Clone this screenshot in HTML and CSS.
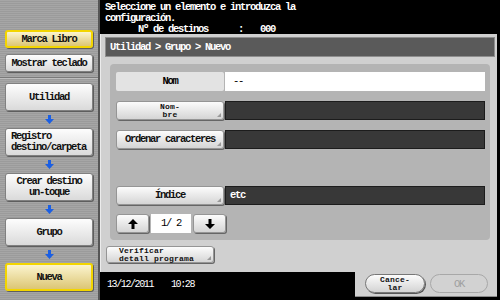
FILE: index.html
```html
<!DOCTYPE html>
<html lang="es">
<head>
    <meta charset="UTF-8">
    <meta name="viewport" content="width=device-width, initial-scale=1.0">
    <title>Utilidad &gt; Grupo &gt; Nuevo</title>
    <link rel="stylesheet" href="styles.css">
</head>
<body>
    <div class="screen">
        <div class="side">
            <div class="side-top">
                <button class="side-btn yellow short">Marca Libro</button>
                <button class="side-btn short">Mostrar teclado</button>
            </div>
            <div class="side-steps">
                <button class="side-btn">Utilidad</button>
                <svg class="step-arrow" width="9" height="9" viewBox="0 0 9 9"><path d="M3 0h3v4h3L4.5 9 0 4h3z"/></svg>
                <button class="side-btn left">Registro<br>destino/carpeta</button>
                <svg class="step-arrow" width="9" height="9" viewBox="0 0 9 9"><path d="M3 0h3v4h3L4.5 9 0 4h3z"/></svg>
                <button class="side-btn">Crear destino<br>un-toque</button>
                <svg class="step-arrow" width="9" height="9" viewBox="0 0 9 9"><path d="M3 0h3v4h3L4.5 9 0 4h3z"/></svg>
                <button class="side-btn">Grupo</button>
                <svg class="step-arrow" width="9" height="9" viewBox="0 0 9 9"><path d="M3 0h3v4h3L4.5 9 0 4h3z"/></svg>
                <button class="side-btn yellow">Nueva</button>
            </div>
        </div>

        <div class="main">
            <div class="header">
                <p>Seleccione un elemento e introduzca la</p>
                <p>configuración.</p>
                <p class="count">Nº de destinos<span class="colon">:</span><span class="num">000</span></p>
            </div>

            <div class="frame">
                <div class="crumb">Utilidad &gt; Grupo &gt; Nuevo</div>
                <div class="panel">
                    <div class="row">
                        <div class="label">Nom</div>
                        <div class="value">--</div>
                    </div>
                    <div class="row">
                        <button class="btn corner tiny">Nom-<br>bre</button>
                        <div class="field"></div>
                    </div>
                    <div class="row">
                        <button class="btn corner">Ordenar caracteres</button>
                        <div class="field"></div>
                    </div>
                    <div class="row index-row">
                        <button class="btn corner">Índice</button>
                        <div class="field">etc</div>
                    </div>
                    <div class="row pager">
                        <button class="btn arrow-btn">
                            <svg width="10" height="10" viewBox="0 0 10 10"><path d="M5 0l5 5H6.5v5h-3V5H0z"/></svg>
                        </button>
                        <div class="page">1/ 2</div>
                        <button class="btn arrow-btn">
                            <svg width="10" height="10" viewBox="0 0 10 10"><path d="M5 10l5-5H6.5V0h-3v5H0z"/></svg>
                        </button>
                    </div>
                </div>
                <button class="btn corner tiny detail">Verificar<br>detall programa</button>
            </div>

            <div class="footer">
                <div class="clock"><span>13/12/2011</span><span>10:28</span></div>
                <div class="actions">
                    <button class="pill tiny">Cance-<br>lar</button>
                    <button class="pill" disabled>OK</button>
                </div>
            </div>
        </div>
    </div>
</body>
</html>
```

FILE: styles.css
```css
body {
    margin: 0;
    background-color: #000;
    font-family: 'Liberation Mono', 'DejaVu Sans Mono', monospace;
    font-size: 10.5px;
    font-weight: bold;
    letter-spacing: -1.3px;
}

p {
    margin: 0;
}

button {
    font-family: inherit;
    font-size: inherit;
    font-weight: inherit;
    letter-spacing: inherit;
    color: #111;
    padding: 0;
    margin: 0;
}

.screen {
    display: flex;
    width: 500px;
    height: 300px;
    overflow: hidden;
}

/* left column */
.side {
    width: 88px;
    padding: 0 5px;
    border-right: 2px solid #555;
    background: repeating-linear-gradient(#a6a6a6 0 1px, #9b9b9b 1px 2px);
}

.side-top {
    display: flex;
    flex-direction: column;
    gap: 6px;
    height: 47px;
    padding-top: 30px;
    margin: 0 -5px;
    padding-left: 5px;
    padding-right: 5px;
    border-bottom: 1px solid #7a7a7a;
    box-shadow: 0 1px 0 #bdbdbd;
}

.side-steps {
    display: flex;
    flex-direction: column;
    align-items: center;
    padding-top: 5px;
}

.side-btn {
    width: 88px;
    height: 28px;
    line-height: 11px;
    border: 1px solid #808080;
    border-radius: 3px;
    background: linear-gradient(#fdfdfd, #dadada);
    box-shadow: 1px 1px 0 #5e5e5e;
}

.side-btn.short {
    height: 18px;
}

.side-btn.left {
    text-align: left;
    padding-left: 5px;
}

.side-btn.yellow {
    border: 2px solid #f3d500;
    background: linear-gradient(#fbf4cf, #dcc674);
}

.step-arrow {
    display: block;
    margin: 4px 0;
    fill: #1b5fe3;
}

/* right side */
.main {
    display: flex;
    flex-direction: column;
    width: 400px;
}

.header {
    height: 33px;
    padding: 2px 0 0 5px;
    color: #fff;
    line-height: 11px;
    overflow: hidden;
}

.count {
    padding-left: 33px;
}

.colon {
    margin-left: 30px;
}

.num {
    margin-left: 17px;
}

.frame {
    margin-right: 3px;
    padding: 3px 2px 9px 4px;
    border-left: 1px solid #ececec;
    background-color: #d0d0d0;
    display: flex;
    flex-direction: column;
    align-items: flex-start;
}

.crumb {
    box-sizing: border-box;
    width: 100%;
    height: 20px;
    padding-left: 4px;
    line-height: 19px;
    color: #fff;
    background-color: #5a5a5a;
    border: 1px solid #8e8e8e;
}

.panel {
    box-sizing: border-box;
    width: 380px;
    margin: 7px 5px 0;
    padding: 8px 5px 7px 6px;
    border-radius: 4px;
    background-color: #b4b4b4;
}

.row {
    display: flex;
    height: 19px;
}

.row + .row {
    margin-top: 10px;
}

.row.index-row {
    margin-top: 37px;
}

.row.pager {
    margin-top: 9px;
}

.label {
    width: 108px;
    text-align: center;
    line-height: 19px;
    background-color: #e3e3e3;
    border-radius: 2px;
}

.value {
    flex: 1;
    margin-left: 1px;
    padding-left: 8px;
    line-height: 19px;
    background-color: #fff;
    font-weight: normal;
}

.btn {
    position: relative;
    width: 108px;
    height: 19px;
    line-height: 11px;
    border: 1px solid #959595;
    border-radius: 3px;
    background: linear-gradient(#fcfcfc, #d5d5d5);
    box-shadow: 1px 1px 0 #666;
}

.btn.corner::after {
    content: '';
    position: absolute;
    right: 2px;
    bottom: 2px;
    border-left: 4px solid transparent;
    border-bottom: 4px solid #9a9a9a;
}

.tiny {
    font-size: 8px;
    line-height: 8px;
    letter-spacing: 0.2px;
}

.field {
    flex: 1;
    margin-left: 1px;
    padding-left: 4px;
    line-height: 17px;
    color: #fff;
    background-color: #383838;
    border: 1px solid #1c1c1c;
}

.arrow-btn {
    width: 33px;
    display: flex;
    align-items: center;
    justify-content: center;
}

.page {
    width: 40px;
    margin: 0 2px;
    line-height: 19px;
    text-align: center;
    background-color: #fff;
    font-weight: normal;
    white-space: pre;
}

.detail {
    height: 17px;
    margin: 6px 0 0 1px;
    text-align: left;
    padding-left: 12px;
    line-height: 8px;
}

.footer {
    display: flex;
    height: 28px;
}

.clock {
    width: 248px;
    padding-left: 7px;
    line-height: 26px;
    color: #fff;
    font-weight: normal;
    font-size: 10px;
    letter-spacing: -1.4px;
    display: flex;
    gap: 18px;
}

.actions {
    flex: 1;
    display: flex;
    gap: 5px;
    height: 22px;
    margin-right: 3px;
    padding: 2px 9px 0 10px;
    background-color: #d0d0d0;
    border-bottom: 1px solid #8a8a8a;
}

.pill {
    width: 60px;
    height: 19px;
    border: 1px solid #777;
    border-radius: 10px;
    background: linear-gradient(#fcfcfc, #d3d3d3);
    box-shadow: 1px 1px 0 #555;
}

.pill:disabled {
    width: 58px;
    color: #a0a0a0;
    font-weight: normal;
    border-color: #a8a8a8;
    background: #d2d2d2;
    box-shadow: none;
}
```
